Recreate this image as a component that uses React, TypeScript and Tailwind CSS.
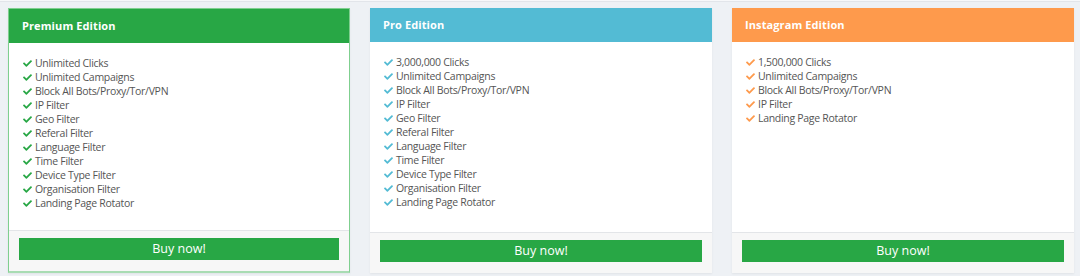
import React from "react";
import { FaCheck } from "react-icons/fa";

type Card = {
  title: string;
  header: string;
  check: string;
  border: boolean;
  items: string[];
};

const filters = [
  "Unlimited Campaigns",
  "Block All Bots/Proxy/Tor/VPN",
  "IP Filter",
  "Geo Filter",
  "Referal Filter",
  "Language Filter",
  "Time Filter",
  "Device Type Filter",
  "Organisation Filter",
  "Landing Page Rotator",
];

function CardView({ c }: { c: Card }) {
  return (
    <div
      className={
        "w-[342px] h-[265px] flex flex-col bg-white shadow-[0_1px_2px_rgba(0,0,0,0.06)] " +
        (c.border ? "border border-[#7fcf8f] border-b-2 border-b-[#a8dcb3]" : "")
      }
    >
      <div
        className={
          "h-[34px] shrink-0 flex items-center pl-[13px] text-white text-[11px] font-bold tracking-[0.1px] " +
          c.header
        }
      >
        {c.title}
      </div>
      <ul className="flex-1 pt-[13px] pl-[14px] text-[#555] text-[10.5px] leading-[14px] tracking-[-0.3px]">
        {c.items.map((it) => (
          <li key={it} className="flex items-center h-[14px]">
            <FaCheck className={"w-[9px] h-[9px] mr-[3px] " + c.check} />
            <span>{it}</span>
          </li>
        ))}
      </ul>
      <div className="h-[41px] shrink-0 border-t border-[#e3e5e8] bg-[#f7f7f7] flex items-start pt-[7px] px-[10px]">
        <button className="w-full h-[22px] bg-[#28a745] text-white text-[12.5px] flex items-center justify-center">
          Buy now!
        </button>
      </div>
    </div>
  );
}

export default function App() {
  const cards: Card[] = [
    {
      title: "Premium Edition",
      header: "bg-[#28a745]",
      check: "text-[#28a745]",
      border: true,
      items: ["Unlimited Clicks", ...filters],
    },
    {
      title: "Pro Edition",
      header: "bg-[#53bbd4]",
      check: "text-[#53bbd4]",
      border: false,
      items: ["3,000,000 Clicks", ...filters],
    },
    {
      title: "Instagram Edition",
      header: "bg-[#fe9a4c]",
      check: "text-[#fe9a4c]",
      border: false,
      items: [
        "1,500,000 Clicks",
        "Unlimited Campaigns",
        "Block All Bots/Proxy/Tor/VPN",
        "IP Filter",
        "Landing Page Rotator",
      ],
    },
  ];
  return (
    <div
      className="w-[1080px] h-[276px] bg-[#eef1f5] overflow-hidden"
      style={{ fontFamily: '"Open Sans", "Liberation Sans", sans-serif' }}
    >
      <div className="h-[2px] bg-[#f7f8fa] border-b border-[#e2e5ea]" />
      <div className="flex gap-[20px] pl-[8px] pt-[6px]">
        {cards.map((c) => (
          <CardView key={c.title} c={c} />
        ))}
      </div>
    </div>
  );
}
